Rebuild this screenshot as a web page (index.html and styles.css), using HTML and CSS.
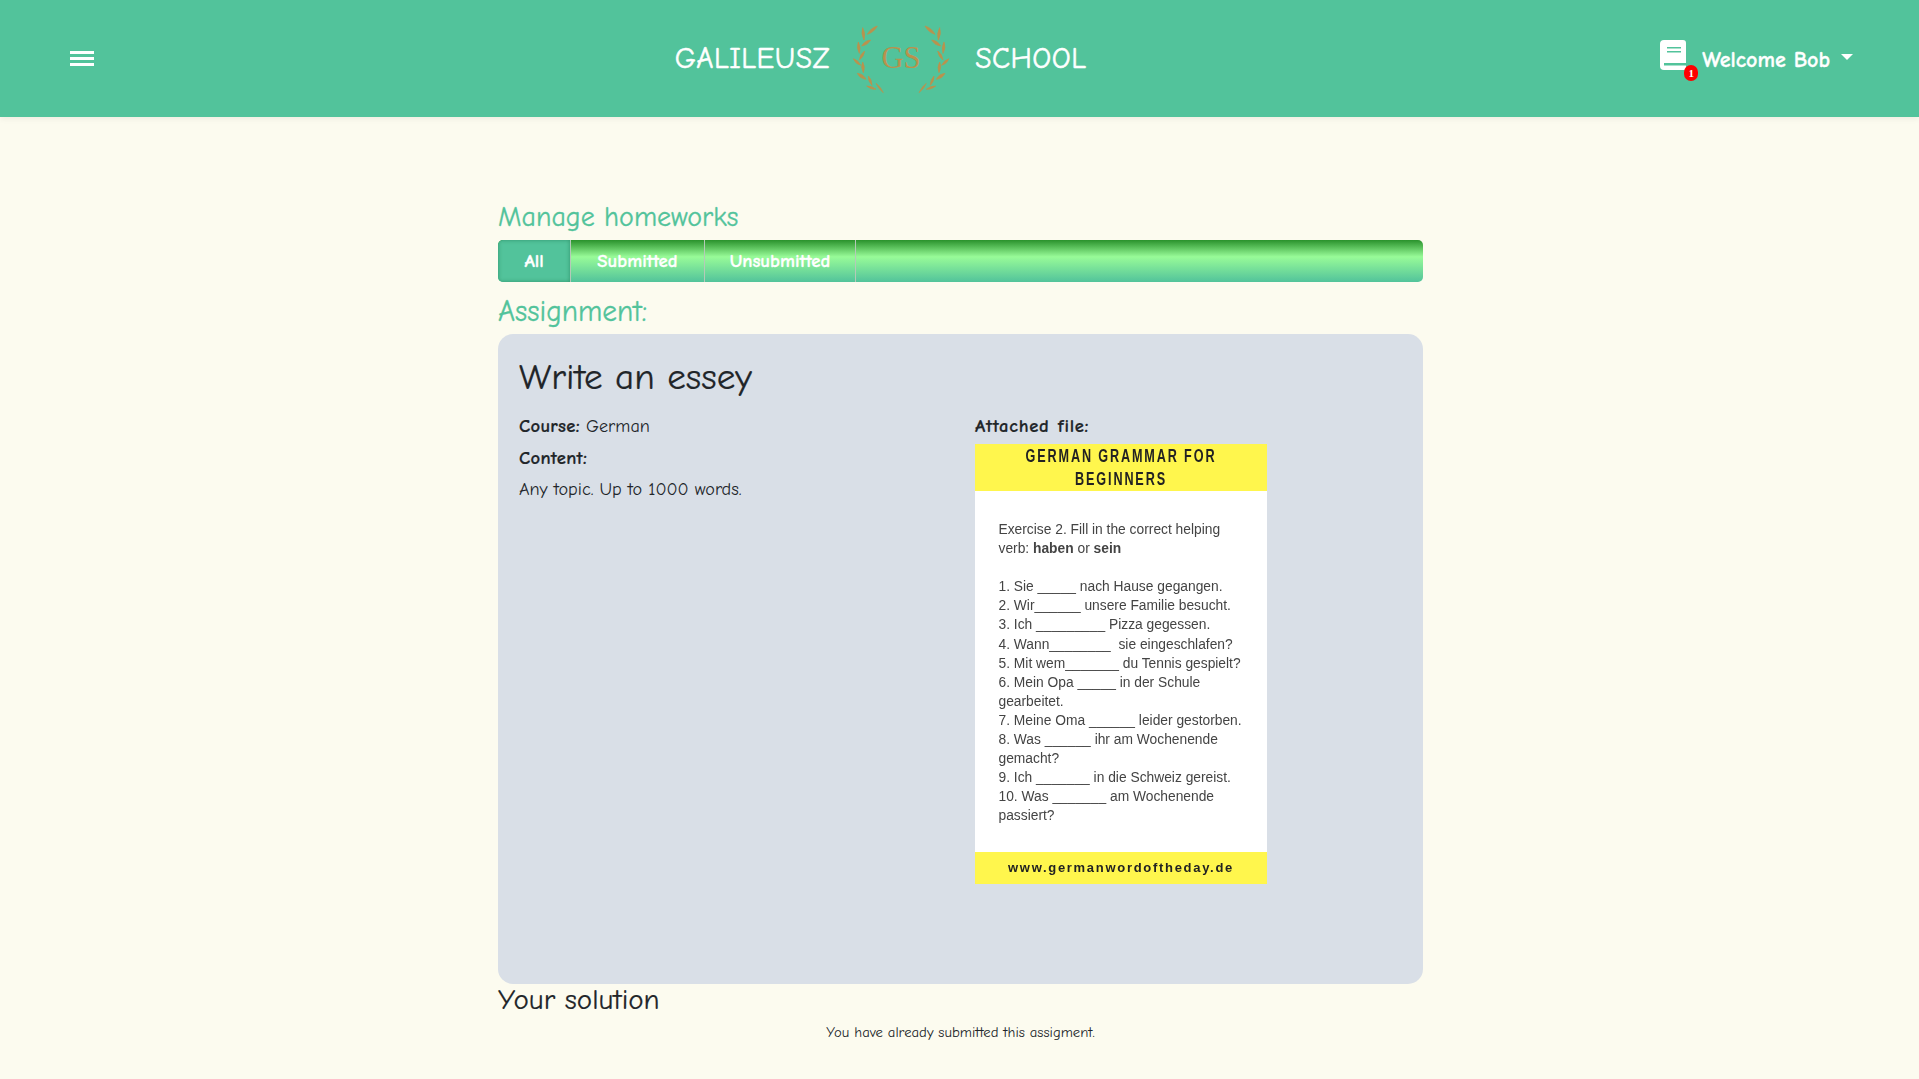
FILE: index.html
```html
<!DOCTYPE html>
<html lang="en">
<head>
<meta charset="UTF-8" />
<title>Manage homeworks</title>
<link rel="stylesheet" href="styles.css">
</head>
<body>
  <header class="topbar">
    <div class="menu-btn"><span></span><span></span><span></span></div>
    <div class="brand">
      <span class="brand-word">GALILEUSZ</span>
      <svg class="laurel" viewBox="0 0 360 255">
        <g id="branch">
          <path d="M112 30Q102 49 82 55Q92 36 112 30Z"/>
          <path d="M68 35Q78 53 72 72Q62 53 68 35Z"/>
          <path d="M92 72Q82 88 65 90Q74 74 92 72Z"/>
          <path d="M55 78Q64 95 58 112Q48 95 55 78Z"/>
          <path d="M74 105Q72 122 58 132Q60 114 74 105Z"/>
          <path d="M40 128Q56 133 62 148Q46 143 40 128Z"/>
          <path d="M68 138Q77 154 70 170Q61 154 68 138Z"/>
          <path d="M52 172Q70 174 78 190Q60 188 52 172Z"/>
          <path d="M85 180Q96 191 96 208Q84 197 85 180Z"/>
          <path d="M80 210Q96 209 108 220Q92 221 80 210Z"/>
          <path d="M108 202Q123 213 130 230Q115 219 108 202Z"/>
        </g>
        <use href="#branch" transform="translate(367 0) scale(-1 1)"/>
        <text x="183" y="155" text-anchor="middle" class="laurel-text">GS</text>
      </svg>
      <span class="brand-word">SCHOOL</span>
    </div>
    <div class="user-box">
      <div class="book">
        <svg viewBox="0 0 26 30" width="26" height="30">
          <path fill="#fff" d="M4 0H23Q26 0 26 3V30H4Q0 30 0 26V4Q0 0 4 0Z"/>
          <path fill="#52c39b" d="M7 7H21V8.500H7ZM7 11H21V12.500H7ZM4 23H26V25.500H4Z"/>
        </svg>
        <span class="badge">1</span>
      </div>
      <span class="welcome">Welcome Bob</span>
      <span class="caret"></span>
    </div>
  </header>

  <main class="page">
    <h2 class="section-title">Manage homeworks</h2>
    <nav class="tabs">
      <a class="tab tab-active tab-all">All</a>
      <a class="tab tab-sub">Submitted</a>
      <a class="tab tab-unsub">Unsubmitted</a>
    </nav>
    <h2 class="section-title assignment-title">Assignment:</h2>

    <section class="card">
      <h1 class="card-title">Write an essey</h1>
      <div class="card-cols">
        <div class="info">
          <p><b>Course:</b> German</p>
          <p><b>Content:</b></p>
          <p>Any topic. Up to 1000 words.</p>
        </div>
        <div class="attached">
          <p><b>Attached file:</b></p>
          <div class="sheet">
            <div class="sheet-head"><div class="sheet-head-text">GERMAN GRAMMAR FOR<br>BEGINNERS</div></div>
            <div class="sheet-body">
              <div>Exercise 2. Fill in the correct helping<br>verb: <b>haben</b> or <b>sein</b></div>
              <br>
              <div>1. Sie _____ nach Hause gegangen.</div>
              <div>2. Wir______ unsere Familie besucht.</div>
              <div>3. Ich _________ Pizza gegessen.</div>
              <div>4. Wann________ &nbsp;sie eingeschlafen?</div>
              <div>5. Mit wem_______ du Tennis gespielt?</div>
              <div>6. Mein Opa _____ in der Schule<br>gearbeitet.</div>
              <div>7. Meine Oma ______ leider gestorben.</div>
              <div>8. Was ______ ihr am Wochenende<br>gemacht?</div>
              <div>9. Ich _______ in die Schweiz gereist.</div>
              <div>10. Was _______ am Wochenende<br>passiert?</div>
            </div>
            <div class="sheet-foot">www.germanwordoftheday.de</div>
          </div>
        </div>
      </div>
    </section>

    <h3 class="solution-title">Your solution</h3>
    <p class="solution-note">You have already submitted this assigment.</p>
  </main>
</body>
</html>
```

FILE: styles.css
```css
* {
  box-sizing: border-box;
}
html, body {
  height: 100%;
}
body {
  margin: 0;
  background: #fcfbef;
  color: #212529;
  font-family: "Comic Sans MS", "Comic Neue", Lato, sans-serif;
  overflow: hidden;
}
.topbar {
  height: 117px;
  background: #52c39b;
  display: flex;
  align-items: center;
  justify-content: space-between;
  padding: 0 66px 0 70px;
  box-shadow: 0 2px 6px rgba(0,0,0,0.06);
}
.menu-btn {
  width: 24px;
  display: flex;
  flex-direction: column;
  gap: 3px;
  margin-top: -1px;
}
.menu-btn span {
  height: 3px;
  background: #fff;
}
.brand {
  display: flex;
  align-items: center;
  color: #fff;
  margin: -1px 0 0 7px;
}
.brand-word {
  font-size: 29.500px;
  letter-spacing: 0.5px;
  -webkit-text-stroke: 0.5px #fff;
}
.laurel {
  width: 120px;
  height: 85px;
  margin: 0 15px 0 10px;
  fill: #b9924d;
  stroke: #b9924d;
  stroke-width: 2;
}
.laurel-text {
  font-family: "Liberation Serif", serif;
  font-size: 92px;
  stroke: none;
}
.user-box {
  display: flex;
  align-items: center;
  color: #fff;
}
.book {
  position: relative;
  height: 30px;
  margin-right: 16px;
  margin-top: -7px;
}
.book svg {
  display: block;
}
.badge {
  position: absolute;
  left: 24px;
  top: 25px;
  width: 14px;
  height: 16px;
  border-radius: 7px;
  background: #f00;
  font-family: "Liberation Serif", serif;
  font-weight: 700;
  font-size: 11px;
  line-height: 16px;
  text-align: center;
}
.welcome {
  font-size: 22px;
  font-weight: 700;
  margin-top: 2px;
  -webkit-text-stroke: 0.3px #fff;
}
.caret {
  margin-left: 11px;
  margin-top: -3px;
  border-top: 6px solid #fff;
  border-left: 6px solid transparent;
  border-right: 6px solid transparent;
}

.page {
  width: 925px;
  margin: 0 auto;
  padding-top: 82px;
  transform: translateX(1px);
}
.section-title {
  margin: 0;
  color: #52c39b;
  font-size: 28px;
  font-weight: 400;
  line-height: 36px;
  -webkit-text-stroke: 0.3px #52c39b;
}
.tabs {
  height: 42px;
  margin-top: 5px;
  display: flex;
  border-radius: 5px;
  overflow: hidden;
  background: linear-gradient(#2a922c, #98fb98 40%, #52c39b);
}
.tab {
  display: flex;
  align-items: center;
  justify-content: center;
  color: #fff;
  font-size: 18.800px;
  font-weight: 700;
  border-right: 1px solid #b5c9b8;
  -webkit-text-stroke: 0.3px #fff;
}
.tab-all {
  width: 73px;
}
.tab-sub {
  width: 134px;
}
.tab-unsub {
  width: 151px;
}
.tab-active {
  background: #52c39b;
  box-shadow: inset 0 0 4px rgba(0,80,40,0.4);
}
.assignment-title {
  margin-top: 10px;
  line-height: 40px;
  font-size: 29.400px;
}
.card {
  height: 650px;
  margin-top: 2px;
  padding: 20px 21px;
  background: #d9dfe7;
  border-radius: 15px;
}
.card-title {
  margin: 0 0 14px;
  font-size: 37.200px;
  font-weight: 400;
  line-height: 46px;
  -webkit-text-stroke: 0.2px #212529;
}
.card-cols {
  display: grid;
  grid-template-columns: 456px 1fr;
}
.info p, .attached p {
  margin: 0 0 7px;
  font-size: 18.200px;
  line-height: 24px;
}
.info b, .attached p b {
  font-size: 18.600px;
  letter-spacing: 0.3px;
  -webkit-text-stroke: 0.2px #212529;
}
.attached p {
  margin-bottom: 5px;
}
.attached p b {
  letter-spacing: 0.7px;
  word-spacing: 1px;
}
.sheet {
  width: 292px;
  height: 440px;
  display: flex;
  flex-direction: column;
  background: #fff;
  filter: blur(0.4px);
  font-family: "Liberation Sans", Arial, sans-serif;
}
.sheet-head {
  height: 47px;
  background: #fff64d;
  color: #222;
  font-weight: 700;
  font-size: 19px;
  line-height: 23px;
  letter-spacing: 2.8px;
  text-align: center;
  white-space: nowrap;
}
.sheet-head-text {
  transform: scaleX(0.665);
}
.sheet-body {
  flex: 1;
  padding: 29px 20px 0 23.500px;
  color: #444;
  font-size: 13.800px;
  line-height: 19.100px;
  white-space: nowrap;
}
.sheet-foot {
  height: 32px;
  background: #fff64d;
  color: #222;
  font-weight: 700;
  font-size: 13px;
  line-height: 32px;
  letter-spacing: 1.700px;
  text-align: center;
}
.solution-title {
  margin: 0;
  font-size: 29px;
  font-weight: 400;
  line-height: 32px;
  -webkit-text-stroke: 0.2px #212529;
}
.solution-note {
  margin: 7px 0 0;
  font-size: 14.700px;
  line-height: 20px;
  text-align: center;
}
```
